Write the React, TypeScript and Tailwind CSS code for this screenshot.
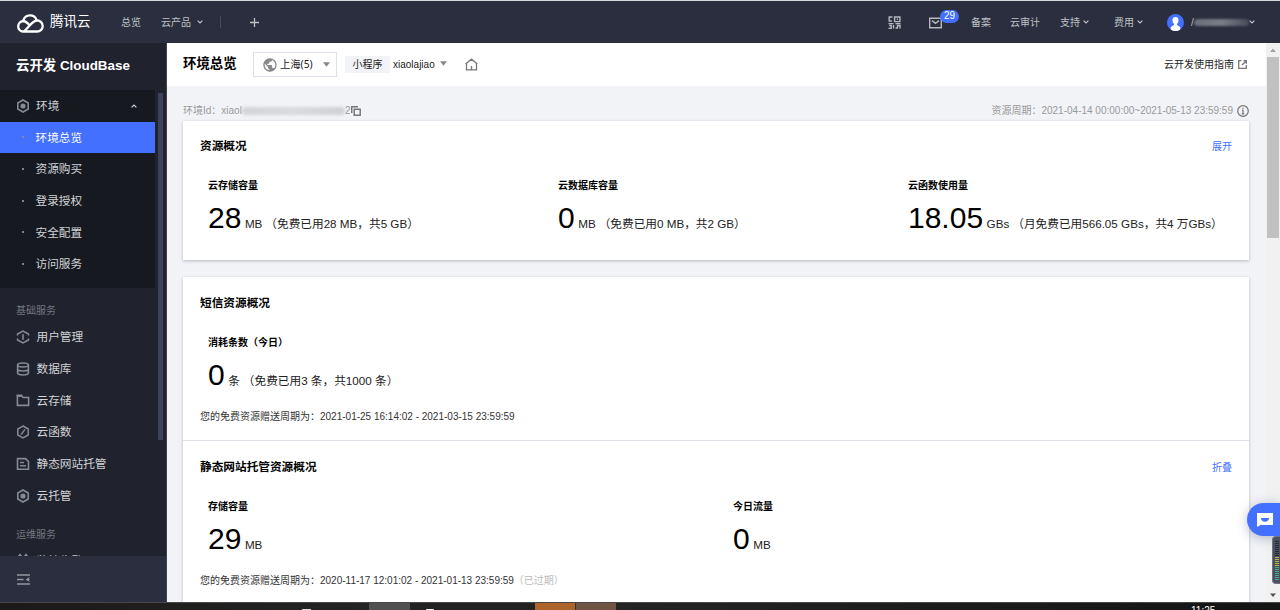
import React from "react";

type IconKind = "hex" | "user" | "db" | "folder" | "fn" | "doc" | "monitor";

function SideIcon({ kind }: { kind: IconKind }) {
  return (
    <svg viewBox="0 0 14 14" className="h-3.5 w-3.5 shrink-0" fill="none" stroke="#858b95" strokeWidth="1.6">
      {kind === "hex" && (
        <>
          <path d="M7 1 12.2 4v6L7 13 1.8 10V4Z" />
          <circle cx="7" cy="7" r="2.6" fill="#858b95" stroke="none" />
        </>
      )}
      {kind === "user" && (
        <>
          <path d="M1.5 5.600V4L7 1l5.500 3v1.600M1.500 8.400V10L7 13l5.500-3V8.400" strokeWidth="1.500" />
          <path d="M7 4.300v5.400" />
        </>
      )}
      {kind === "db" && (
        <>
          <ellipse cx="7" cy="3" rx="5.400" ry="2" />
          <path d="M1.600 3v8c0 2.600 10.800 2.600 10.800 0V3M1.600 7c0 2.600 10.800 2.600 10.800 0" />
        </>
      )}
      {kind === "folder" && (
        <>
          <path d="M1.400 12.400V3h4.500l1.200 1.500h5.500v7.900Z" />
          <path d="M.600 2.600h5.600" strokeWidth="2.200" />
        </>
      )}
      {kind === "fn" && (
        <>
          <path d="M7 1 12.200 4v6L7 13 1.800 10V4Z" strokeWidth="1.500" />
          <path d="M9 4.300 7 7M7 7 5 9.700" strokeWidth="1.400" />
        </>
      )}
      {kind === "doc" && (
        <>
          <path d="M1.500 1.600h8l3 3v7.700h-11Z" />
          <path d="M4 5.500h4M4 8.700h6" />
        </>
      )}
      {kind === "monitor" && <path d="M1.500 5 4 1.500 6 4M8 4l2-2.500L12.500 5M1.500 7v5.500h11V7" />}
    </svg>
  );
}

function Chevron({ up = false }: { up?: boolean }) {
  return (
    <svg viewBox="0 0 6 4" className="h-1 w-1.5 shrink-0" fill="none" stroke="currentColor" strokeWidth="1.2">
      <path d={up ? "M.6 3.4 3 1 5.4 3.4" : "M.6.6 3 3 5.4.6"} />
    </svg>
  );
}

function Caret() {
  return (
    <svg viewBox="0 0 8 5" className="h-[5px] w-[7px] shrink-0" fill="#888">
      <path d="M0 0h8L4 5Z" />
    </svg>
  );
}

const subItems = ["资源购买", "登录授权", "安全配置", "访问服务"];
const services: [IconKind, string][] = [
  ["user", "用户管理"],
  ["db", "数据库"],
  ["folder", "云存储"],
  ["fn", "云函数"],
  ["doc", "静态网站托管"],
  ["hex", "云托管"],
];

function TopNav() {
  return (
    <header className="flex h-[43px] shrink-0 items-center border-t border-[#d5d8dc] bg-[#2a2e3e] text-[10px] text-[#bfc1c7]">
      <svg viewBox="0 0 28 21" className="ml-4 h-[21px] w-7" fill="none" stroke="#fff" strokeWidth="2.3">
        <path d="M7.4 8.200A7 7 0 0 1 20.600 7.800" />
        <path d="M13.300 12.900C11.400 10.700 9.700 9 6.900 9a5.300 5.300 0 0 0-.2 10.500H21.200a5.500 5.500 0 0 0 0-11c-5 0-7 5.500-12.800 10.500" />
      </svg>
      <span className="ml-[6px] w-[71px] text-[13.5px] text-white">腾讯云</span>
      <span className="w-10">总览</span>
      <span className="w-[36px]">云产品</span>
      <Chevron />
      <span className="ml-[17px] h-3 w-px bg-[#474b59]" />
      <svg viewBox="0 0 10 10" className="ml-[29px] h-[9px] w-[9px]" stroke="#bfc1c7" strokeWidth="1.4">
        <path d="M5 0v10M0 5h10" />
      </svg>
      <div className="ml-[629px] flex w-[41px]">
        <svg viewBox="0 0 13 13" className="h-[13px] w-[13px]" fill="none" stroke="#b5b8bf" strokeWidth="1.400">
          <path d="M4.500 1H1.200v4H4M6.600 1h5.300v4.600H6.600ZM8.800 3.200h1.200M.500 7.600h5M7.500 7.600h5M1.200 9.500h2v3H.500M5.500 9v3.500M7.500 12h2V9.500H12v3" />
        </svg>
      </div>
      <div className="relative flex w-[42px]">
        <svg viewBox="0 0 13 12" className="mt-px h-3 w-[13px]" fill="none" stroke="#b5b8bf" strokeWidth="1.4">
          <path d="M.7 1.2h11.6v9.600H.7ZM3 3.600l3.500 2.800L10 3.600" />
        </svg>
        <span className="absolute -top-[6px] left-[11px] flex h-[13px] w-[19px] items-center justify-center rounded-full bg-[#4370ff] text-[10px] leading-none text-white">29</span>
      </div>
      <span className="w-[39px]">备案</span>
      <span className="w-[50px]">云审计</span>
      <span className="flex w-[54px] items-center gap-[3px]">支持<Chevron /></span>
      <span className="flex w-[53px] items-center gap-[3px]">费用<Chevron /></span>
      <svg viewBox="0 0 17 17" className="h-[17px] w-[17px]">
        <circle cx="8.5" cy="8.5" r="8.5" fill="#4370ff" />
        <path d="M8.500 3a3 3.300 0 0 0-3 3.400c0 1.500.600 2.700 1.500 3.400v1.300L3.800 13v2.600a8.500 8.500 0 0 0 9.400 0V13L10 11.100V9.800c.900-.700 1.500-1.900 1.500-3.400A3 3.300 0 0 0 8.500 3Z" fill="#fff" />
      </svg>
      <span className="ml-[7px]">/</span>
      <span className="h-[7px] w-[55px] rounded-full bg-linear-to-r from-[#6b6e7b] via-[#7b7e89] to-[#484c5a] blur-[1px]" />
      <Chevron />
    </header>
  );
}

function Sidebar() {
  return (
    <aside className="flex w-[167px] shrink-0 flex-col border-r border-[#41444f] bg-[#20222d] text-[11.67px] text-[#d0d2d6]">
      <div className="flex h-[47px] shrink-0 items-center whitespace-pre pl-4 text-[13.4px] font-bold text-white">云开发 CloudBase</div>
      <div className="flex min-h-0 flex-1 overflow-hidden">
        <div className="w-[154.5px] shrink-0">
          <div className="h-[198px] bg-[#171921]">
            <div className="flex h-[31.5px] items-center pl-4">
              <SideIcon kind="hex" />
              <span className="ml-1.5 w-[95px]">环境</span>
              <Chevron up />
            </div>
            <div className="flex h-[31.5px] items-center bg-[#4370ff] pl-[22px] text-white">
              <i className="mr-[11.5px] h-0.5 w-0.5 rounded-full bg-[#8d8f8e]" />
              环境总览
            </div>
            {subItems.map((t) => (
              <div key={t} className="flex h-[31.75px] items-center pl-[22px]">
                <i className="mr-[11.5px] h-0.5 w-0.5 rounded-full bg-[#a5a7ab]" />
                {t}
              </div>
            ))}
          </div>
          <div className="flex h-[33px] items-end pl-4 text-[10px] leading-[20px] text-[#73767f]">基础服务</div>
          {services.map(([kind, t]) => (
            <div key={t} className="flex h-[31.75px] items-center gap-[6.5px] pl-4">
              <SideIcon kind={kind} />
              {t}
            </div>
          ))}
          <div className="flex h-[33px] items-end pl-4 text-[10px] leading-[20px] text-[#73767f]">运维服务</div>
          <div className="flex h-[31.75px] items-center gap-[6.5px] pl-4">
            <SideIcon kind="monitor" />
            监控告警
          </div>
        </div>
        <div className="ml-[3px] mt-[3px] h-[347px] w-[5.5px] bg-[#3b4259]" />
      </div>
      <div className="flex h-[46px] shrink-0 items-center bg-[#2a2e3e] pl-[17px]">
        <svg viewBox="0 0 13 11" className="h-[11px] w-[13px]" stroke="#92969f" strokeWidth="1.4">
          <path d="M0 1h13M0 5.500h6.500M0 10h13" />
          <path d="M12.300 3.300v4.400L8.500 5.500Z" fill="#92969f" stroke="none" />
        </svg>
      </div>
    </aside>
  );
}

function PageHeader() {
  return (
    <div className="flex h-[43px] shrink-0 items-center bg-white pl-4 text-[10px] text-[#222]">
      <h1 className="w-[70px] text-[13.4px] font-bold text-black">环境总览</h1>
      <div className="flex h-[25px] w-[84px] items-center border border-[#dcdfe8] pl-2">
        <svg viewBox="0 0 24 24" className="h-4 w-4 shrink-0" fill="#888">
          <path d="M12 2C6.480 2 2 6.480 2 12s4.480 10 10 10 10-4.480 10-10S17.520 2 12 2zm-1 17.930c-3.950-.490-7-3.850-7-7.930 0-.620.080-1.210.210-1.790L9 15v1c0 1.100.900 2 2 2v1.930zm6.900-2.540c-.260-.810-1-1.390-1.900-1.390h-1v-3c0-.550-.450-1-1-1H8v-2h2c.550 0 1-.450 1-1V7h2c1.100 0 2-.900 2-2v-.410c2.930 1.190 5 4.060 5 7.410 0 2.080-.800 3.970-2.100 5.390z" />
        </svg>
        <span className="ml-[2px] w-[43px] font-['Noto_Sans','Noto_Sans_CJK_SC',sans-serif] text-[10.3px]">上海(5)</span>
        <Caret />
      </div>
      <span className="ml-2 flex h-[17px] w-[45px] items-center justify-center bg-[#f2f3f7]">小程序</span>
      <span className="ml-[3px] w-[47px]">xiaolajiao</span>
      <span className="mb-0.5"><Caret /></span>
      <svg viewBox="0 0 13 13" className="ml-[18px] h-[13px] w-[13px]" fill="none" stroke="#777" strokeWidth="1.3">
        <path d="M1.500 5.300v6.600h10V5.300M.600 6 6.500 1.200 12.400 6M6.500 11.500V8" />
      </svg>
      <span className="ml-auto">云开发使用指南</span>
      <svg viewBox="0 0 9 9" className="ml-1 mr-[19px] h-[9px] w-[9px]" fill="none" stroke="#777" strokeWidth="1.300">
        <path d="M3.500.700H.700v7.600h7.600V5M5.500.700h2.800v3M8 1 4 5" />
      </svg>
    </div>
  );
}

function Metric({ title, value, unit, note, width }: { title: string; value: string; unit: string; note?: string; width: string }) {
  return (
    <div className={"shrink-0 whitespace-nowrap " + width}>
      <h3 className="h-4 text-[10px] font-bold leading-4 text-black">{title}</h3>
      <div className="flex h-12 items-baseline text-[11.67px] text-[#222]">
        <span className="text-[30px] leading-[48px] text-black">{value}</span>
        <span className="ml-[3.5px]">{unit}</span>
        {note && <span className="ml-[3px]">{note}</span>}
      </div>
    </div>
  );
}

function CardTitle({ title, action }: { title: string; action?: string }) {
  return (
    <div className="flex h-5 items-center justify-between px-[17px]">
      <h2 className="text-[11.67px] font-bold text-black">{title}</h2>
      <span className="text-[10px] text-[#4370ff]">{action}</span>
    </div>
  );
}

function Content() {
  return (
    <main className="min-h-0 flex-1 overflow-hidden pl-4 pr-4">
      <div className="flex h-[35px] items-end text-[10px] text-[#999]">
        <div className="flex h-[21px] items-center">
          <span>环境Id：xiaol</span>
          <span className="h-2 w-[103px] rounded-full bg-linear-to-r from-[#d2d4d8] via-[#d8dade] to-[#cfd1d6] blur-[1.5px]" />
          <span>2</span>
          <svg viewBox="0 0 10 10" className="ml-px mt-px h-2.5 w-2.5" fill="none" stroke="#777" strokeWidth="1.500">
            <path d="M.700 7V.700H7M3.200 3.200h6v6h-6Z" />
          </svg>
        </div>
        <div className="ml-auto flex h-[21px] items-center">
          <span>资源周期：2021-04-14 00:00:00~2021-05-13 23:59:59</span>
          <svg viewBox="0 0 12 12" className="ml-1 mr-px mt-px h-3 w-3" fill="none" stroke="#777" strokeWidth="1.200">
            <circle cx="6" cy="6" r="5.300" />
            <path d="M6 5v4M5 5.200h1M4.800 8.800h2.400M6 2.800v1.200" />
          </svg>
        </div>
      </div>
      <section className="h-[139px] w-[1066px] bg-white pt-[15px] shadow-[0_1px_3px_rgba(54,58,80,0.32)]">
        <CardTitle title="资源概况" action="展开" />
        <div className="mt-[22px] flex pl-[25px]">
          <Metric width="w-[350px]" title="云存储容量" value="28" unit="MB" note="（免费已用28 MB，共5 GB）" />
          <Metric width="w-[350px]" title="云数据库容量" value="0" unit="MB" note="（免费已用0 MB，共2 GB）" />
          <Metric width="w-[330px]" title="云函数使用量" value="18.05" unit="GBs" note="（月免费已用566.05 GBs，共4 万GBs）" />
        </div>
      </section>
      <section className="mt-[17px] h-[400px] w-[1066px] bg-white shadow-[0_1px_3px_rgba(54,58,80,0.32)]">
        <div className="h-[164px] border-b border-[#dfe1e6] pt-4">
          <CardTitle title="短信资源概况" />
          <div className="mt-[22px] flex pl-[25px]">
            <Metric width="w-[350px]" title="消耗条数（今日）" value="0" unit="条" note="（免费已用3 条，共1000 条）" />
          </div>
          <p className="mt-[10px] pl-[17px] text-[10px] leading-4 text-[#333]">您的免费资源赠送周期为：2021-01-25 16:14:02 - 2021-03-15 23:59:59</p>
        </div>
        <div className="pt-4">
          <CardTitle title="静态网站托管资源概况" action="折叠" />
          <div className="mt-[22px] flex pl-[25px]">
            <Metric width="w-[525px]" title="存储容量" value="29" unit="MB" />
            <Metric width="w-[350px]" title="今日流量" value="0" unit="MB" />
          </div>
          <p className="mt-[10px] pl-[17px] text-[10px] leading-4 text-[#333]">
            您的免费资源赠送周期为：2020-11-17 12:01:02 - 2021-01-13 23:59:59<span className="text-[#bbb]">（已过期）</span>
          </p>
        </div>
      </section>
    </main>
  );
}

function ChatDock() {
  return (
    <div className="absolute right-0 top-[503px] flex w-[33px] flex-col items-end">
      <div className="flex h-[33px] w-[33px] items-center rounded-l-full bg-[#4370ff] pl-[10px] shadow-[0_2px_12px_rgba(54,70,110,0.35)]">
        <svg viewBox="0 0 16 14" className="h-3.5 w-4">
          <path d="M0 0h16v12H3.500L0 14Z" fill="#fff" />
          <path d="M4 5h8c0 5-8 5-8 0Z" fill="#4370ff" />
        </svg>
      </div>
      <div className="flex h-12 w-[8px] flex-col items-center gap-px rounded-l border border-r-0 border-[#6d7180] bg-[#4b5060] pt-1">
        {Array.from({ length: 20 }, (_, i) => (
          <i key={i} className={"h-px w-1 shrink-0 " + (i < 8 ? "bg-[#262a35]" : i < 13 ? "bg-[#b9b545]" : "bg-[#3fae85]")} />
        ))}
      </div>
    </div>
  );
}

function Taskbar() {
  return (
    <footer className="flex h-2 shrink-0 overflow-hidden border-t border-[#484848] bg-[#222] text-white">
      <div className="flex w-[369px] items-end justify-end bg-linear-to-r from-[#1b1a18] to-[#242424] pr-[58px]">
        <i className="h-px w-[9px] bg-[#ddd]" />
      </div>
      <div className="w-[41px] bg-[#505050]" />
      <div className="flex w-[125px] items-end pl-4">
        <i className="h-px w-2 rounded-t bg-white" />
      </div>
      <div className="w-10 bg-[#ad642b]" />
      <div className="w-[41px] border-l border-[#3b302a] bg-[#705546]" />
      <div className="flex-1 bg-linear-to-r from-[#242424] to-[#141414] pl-[575px] pt-0.5 text-[10px] leading-3">11:25</div>
    </footer>
  );
}

export default function App() {
  return (
    <div className="relative flex h-[610px] w-[1280px] flex-col overflow-hidden bg-[#f2f3f7] font-['Liberation_Sans','Noto_Sans_CJK_SC',sans-serif]">
      <TopNav />
      <div className="flex min-h-0 flex-1">
        <Sidebar />
        <div className="flex min-w-0 flex-1 flex-col">
          <PageHeader />
          <Content />
        </div>
        <div className="flex w-3.5 shrink-0 flex-col items-center bg-[#f1f1f1]">
          <svg viewBox="0 0 14 14" className="h-3.5 w-3.5" fill="#a3a3a3"><path d="M4 9h6L7 5.500Z" /></svg>
          <div className="h-[181px] w-3 bg-[#c1c1c1]" />
          <svg viewBox="0 0 14 14" className="mt-auto h-3.5 w-3.5" fill="#505050"><path d="M4 5.500h6L7 9Z" /></svg>
        </div>
      </div>
      <Taskbar />
      <ChatDock />
    </div>
  );
}
